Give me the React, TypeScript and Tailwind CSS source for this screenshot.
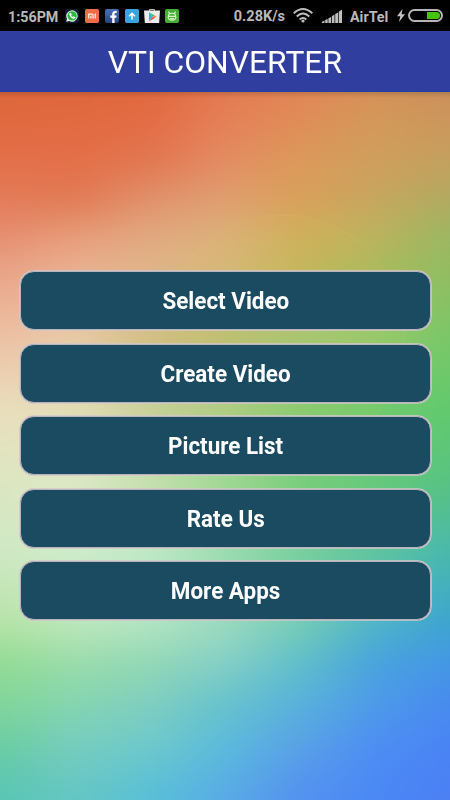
import React from "react";
import { FaFacebookF } from "react-icons/fa";

const COLUMNS = 6;
const ROWS: { y: number; colors: string[] }[] = [
  { y: 92, colors: ["#dd673b", "#df673d", "#e0693f", "#e37a50", "#e18656", "#d69159", "#ca905b"] },
  { y: 120, colors: ["#e0693f", "#e16a41", "#e46c45", "#e58058", "#e08d58", "#d39a5a", "#cd965c"] },
  { y: 160, colors: ["#e4704a", "#e46f48", "#e17650", "#e38c64", "#db9a5a", "#cf9e5d", "#c3a15f"] },
  { y: 200, colors: ["#e37c59", "#e07a55", "#e0926c", "#e09f72", "#d9a05a", "#c6a75f", "#b0aa60"] },
  { y: 230, colors: ["#e58a6c", "#e69873", "#e1a67e", "#dcae7a", "#d0ae5b", "#bfb25f", "#9db663"] },
  { y: 265, colors: ["#e9a084", "#eaaf91", "#e0b48a", "#d8b97a", "#c6b65a", "#acb95c", "#94bb61"] },
  { y: 337, colors: ["#edc0a4", "#e8cba8", "#d3be84", "#bcbf70", "#a8c676", "#98ca6c", "#78c768"] },
  { y: 410, colors: ["#eadfbf", "#e2ddb6", "#c8d09a", "#adce86", "#88ca71", "#70cb6c", "#60ca6e"] },
  { y: 482, colors: ["#dce6c0", "#dee9c6", "#c6dfae", "#a0d892", "#78cd79", "#66c97a", "#58c284"] },
  { y: 555, colors: ["#cfe8c4", "#cdeccb", "#c0e9c8", "#9cdcb2", "#78cfa0", "#60c4a2", "#48b8ae"] },
  { y: 622, colors: ["#b8e3a8", "#bfe8bd", "#b5e5c5", "#9cdac0", "#78cdb5", "#50b5c8", "#3ca4cf"] },
  { y: 660, colors: ["#93dc93", "#9cdcab", "#93d8b5", "#88d0c5", "#60bfc8", "#48a4dc", "#4498e4"] },
  { y: 700, colors: ["#84d69a", "#86d6b0", "#82cfbe", "#68c3cb", "#58b3da", "#4e9be8", "#488bee"] },
  { y: 750, colors: ["#68cca4", "#76ccbe", "#6cc8cc", "#5abadd", "#5a9fe8", "#4d8df3", "#4a83f5"] },
  { y: 800, colors: ["#58c5b5", "#64c6c4", "#56bfd8", "#5aa9e6", "#5390ef", "#4b88f4", "#4c7ff3"] },
];
const LAST = ROWS.length - 1;

// Wallpaper: horizontal colour ramps cross-faded from one row to the next, then softened.
function Wallpaper() {
  return (
    <svg className="absolute inset-0 h-full w-full" viewBox="0 92 450 708" preserveAspectRatio="none">
      <defs>
        <filter id="soften" filterUnits="userSpaceOnUse" x="-60" y="32" width="570" height="828" colorInterpolationFilters="sRGB">
          <feGaussianBlur stdDeviation="14" />
        </filter>
        <linearGradient id="fade" x1="0" y1="0" x2="0" y2="1">
          <stop offset="0" stopColor="#000" />
          <stop offset="1" stopColor="#fff" />
        </linearGradient>
        {ROWS.map((row, i) => (
          <linearGradient key={i} id={`ramp${i}`} gradientUnits="userSpaceOnUse" x1="0" y1="0" x2="450" y2="0">
            {row.colors.map((c, k) => (
              <stop key={k} offset={k / COLUMNS} stopColor={c} />
            ))}
          </linearGradient>
        ))}
        {ROWS.slice(1).map((row, i) => (
          <mask key={i} id={`mask${i}`} maskUnits="userSpaceOnUse" x="-60" y={ROWS[i].y} width="570" height={row.y - ROWS[i].y}>
            <rect x="-60" y={ROWS[i].y} width="570" height={row.y - ROWS[i].y} fill="url(#fade)" />
          </mask>
        ))}
        <linearGradient id="shade" x1="0" y1="0" x2="0" y2="1">
          <stop offset="0" stopColor="#000" stopOpacity="0.14" />
          <stop offset="1" stopColor="#000" stopOpacity="0" />
        </linearGradient>
      </defs>
      <g filter="url(#soften)" shapeRendering="crispEdges">
        <rect x="-60" y="32" width="570" height="60" fill="url(#ramp0)" />
        {ROWS.slice(1).map((row, i) => (
          <g key={i}>
            <rect x="-60" y={ROWS[i].y} width="570" height={row.y - ROWS[i].y} fill={`url(#ramp${i})`} />
            <rect x="-60" y={ROWS[i].y} width="570" height={row.y - ROWS[i].y} fill={`url(#ramp${i + 1})`} mask={`url(#mask${i})`} />
          </g>
        ))}
        <rect x="-60" y="800" width="570" height="60" fill={`url(#ramp${LAST})`} />
      </g>
      <circle cx="283" cy="337" r="122" fill="#e8d860" fillOpacity="0.04" stroke="#f0e890" strokeOpacity="0.05" strokeWidth="2" />
      <rect x="0" y="92" width="450" height="6" fill="url(#shade)" />
    </svg>
  );
}

function NotificationIcons() {
  return (
    <div className="ml-[6px] flex gap-[6px]">
      <span className="flex size-[14px] items-center justify-center rounded-[2px] bg-[#101b30]">
        <svg viewBox="0 0 14 14" className="size-[14px]">
          <path d="M1.3 12.7 2 9.8A5.7 5.7 0 1 1 4.2 12Z" fill="#e8f5ea" />
          <circle cx="7.1" cy="6.9" r="4.700" fill="#2cb742" />
          <path d="M5 4.100c-.9.500-.8 1.900.3 3.300s2.700 2.700 4 2.200c.8-.3.900-.9.800-1.300L8.500 7.400l-.7.700C7 7.900 6.400 7.300 6.100 6.500l.5-.7L5.900 4.200Z" fill="#fff" stroke="#fff" strokeWidth=".3" />
        </svg>
      </span>
      <span className="flex size-[14px] items-center justify-center rounded-[2px] bg-[#ee6c48]">
        <svg viewBox="0 0 14 14" className="size-[14px]" fill="none" stroke="#ffece6" strokeWidth="1.300">
          <path d="M3.700 9.500V5.200H7Q8.100 5.200 8.100 6.300V9.500M5.900 6.800V9.500M10.200 4.600V9.500" />
        </svg>
      </span>
      <span className="flex size-[14px] items-end justify-end overflow-hidden rounded-[2px] bg-gradient-to-b from-[#4a6fb5] to-[#29437f] pr-[1px]">
        <FaFacebookF className="h-[12px] w-[9px] text-white" />
      </span>
      <span className="flex size-[14px] items-center justify-center rounded-[2px] bg-[#39a5e0]">
        <svg viewBox="0 0 14 14" className="size-[14px]" fill="none" stroke="#fff" strokeWidth="1.500">
          <path d="M7 10.500V4.200M4 7.200 7 4.200 10 7.200" />
        </svg>
      </span>
      <svg viewBox="0 0 16 14" className="-mx-[1px] h-[14px] w-[16px]">
        <path d="M5.500 2V.500h5V2" fill="none" stroke="#bbb" />
        <path d="M0 1.600H16L15.200 14H.8Z" fill="#ececec" />
        <path d="M5 3.300V12.200L9 7.700Z" fill="#28b7d8" />
        <path d="M5 3.300 9 7.700 10.500 6.300Z" fill="#48bd68" />
        <path d="M5 12.200 9 7.700 10.500 9.200Z" fill="#e64a43" />
        <path d="M9 7.700 10.500 6.300 12.500 7.700 10.500 9.200Z" fill="#f4882d" />
      </svg>
      <span className="flex size-[14px] rounded-[2px] bg-[#45ad35]">
        <svg viewBox="0 0 14 14" className="size-[14px]" fill="none" stroke="#d9f6c9" strokeWidth="1.100">
          <path d="M3.500 6.800C3.500 3.400 10.500 3.400 10.500 6.800C13 12.600 1 12.600 3.500 6.800ZM3.300 7.400H10.700M4.600 4.400 3.400 2.600M9.400 4.400 10.600 2.600M5.200 9.300Q7 10.300 8.800 9.300" />
        </svg>
      </span>
    </div>
  );
}

function StatusBar() {
  return (
    <header className="flex h-[31px] items-center bg-black pl-[8px] font-bold leading-none text-[#b9b9b9]">
      <span className="w-[51px] whitespace-nowrap pt-[4px] text-[14.300px]">1:56PM</span>
      <NotificationIcons />
      <span className="ml-auto whitespace-nowrap pt-[4px] text-[14.500px]">0.28K/s</span>
      <svg viewBox="0 0 20 15" className="ml-[8px] h-[15px] w-[20px]" fill="none" stroke="#bdbdbd" strokeWidth="1.900">
        <path d="M.7 5.300Q10-3.200 19.300 5.300M3.700 8.500Q10 2.600 16.300 8.500M6.700 11.500Q10 8.500 13.300 11.500" />
        <circle cx="10" cy="13" r="1.600" fill="#bdbdbd" stroke="none" />
      </svg>
      <svg viewBox="0 0 20 14" className="ml-[9px] h-[14px] w-[20px]" fill="#bdbdbd">
        <path d="M0 14V12.700L2.500 11.500V14ZM3.200 14V11L5.700 9.900V14ZM6.400 14V9.300L9 7.900V14ZM9.800 14V7.300L12.500 5.600V14ZM13.200 14V5L16 3.400V14ZM16.700 14V2.700L20 .4V14Z" />
      </svg>
      <span className="ml-[8px] w-[39px] whitespace-nowrap pt-[4px] text-[14.300px]">AirTel</span>
      <svg viewBox="0 0 8 13" className="ml-[8px] h-[13px] w-[8px]" fill="#c4c4c4">
        <path d="M5.500 0 0 7.300H3.300L2 13 8 5.300H4.600Z" />
      </svg>
      <div className="ml-[3px] mr-[7px] flex h-[13px] w-[35px] justify-end rounded-full border-2 border-[#b5b5b5] p-px">
        <span className="h-full w-[13px] rounded-r-full bg-[#45c40a]" />
      </div>
    </header>
  );
}

const ACTIONS = ["Select Video", "Create Video", "Picture List", "Rate Us", "More Apps"];

export default function App() {
  return (
    <div className="flex h-[800px] w-[450px] flex-col overflow-hidden font-['Roboto',sans-serif]">
      <StatusBar />
      <div className="flex h-[61px] items-center justify-center border-b border-[#1e40a8] bg-[#303f9f] pt-[2px] text-[32px] text-white">
        <h1 className="scale-x-[0.993] whitespace-nowrap leading-none">VTI CONVERTER</h1>
      </div>
      <main className="relative flex-1">
        <Wallpaper />
        <nav className="relative flex flex-col gap-[13.500px] pl-[20px] pr-[19px] pt-[179px]">
          {ACTIONS.map((label) => (
            <button
              key={label}
              className="flex h-[59px] w-full items-center justify-center rounded-[14px] border border-[#b9b4bb] bg-[#1a4b61] pt-[1px] text-[24px] font-bold leading-none text-white shadow-[0_0_0_0.8px_#d2c8cb]"
            >
              <span className="scale-x-[0.935]">{label}</span>
            </button>
          ))}
        </nav>
      </main>
    </div>
  );
}
